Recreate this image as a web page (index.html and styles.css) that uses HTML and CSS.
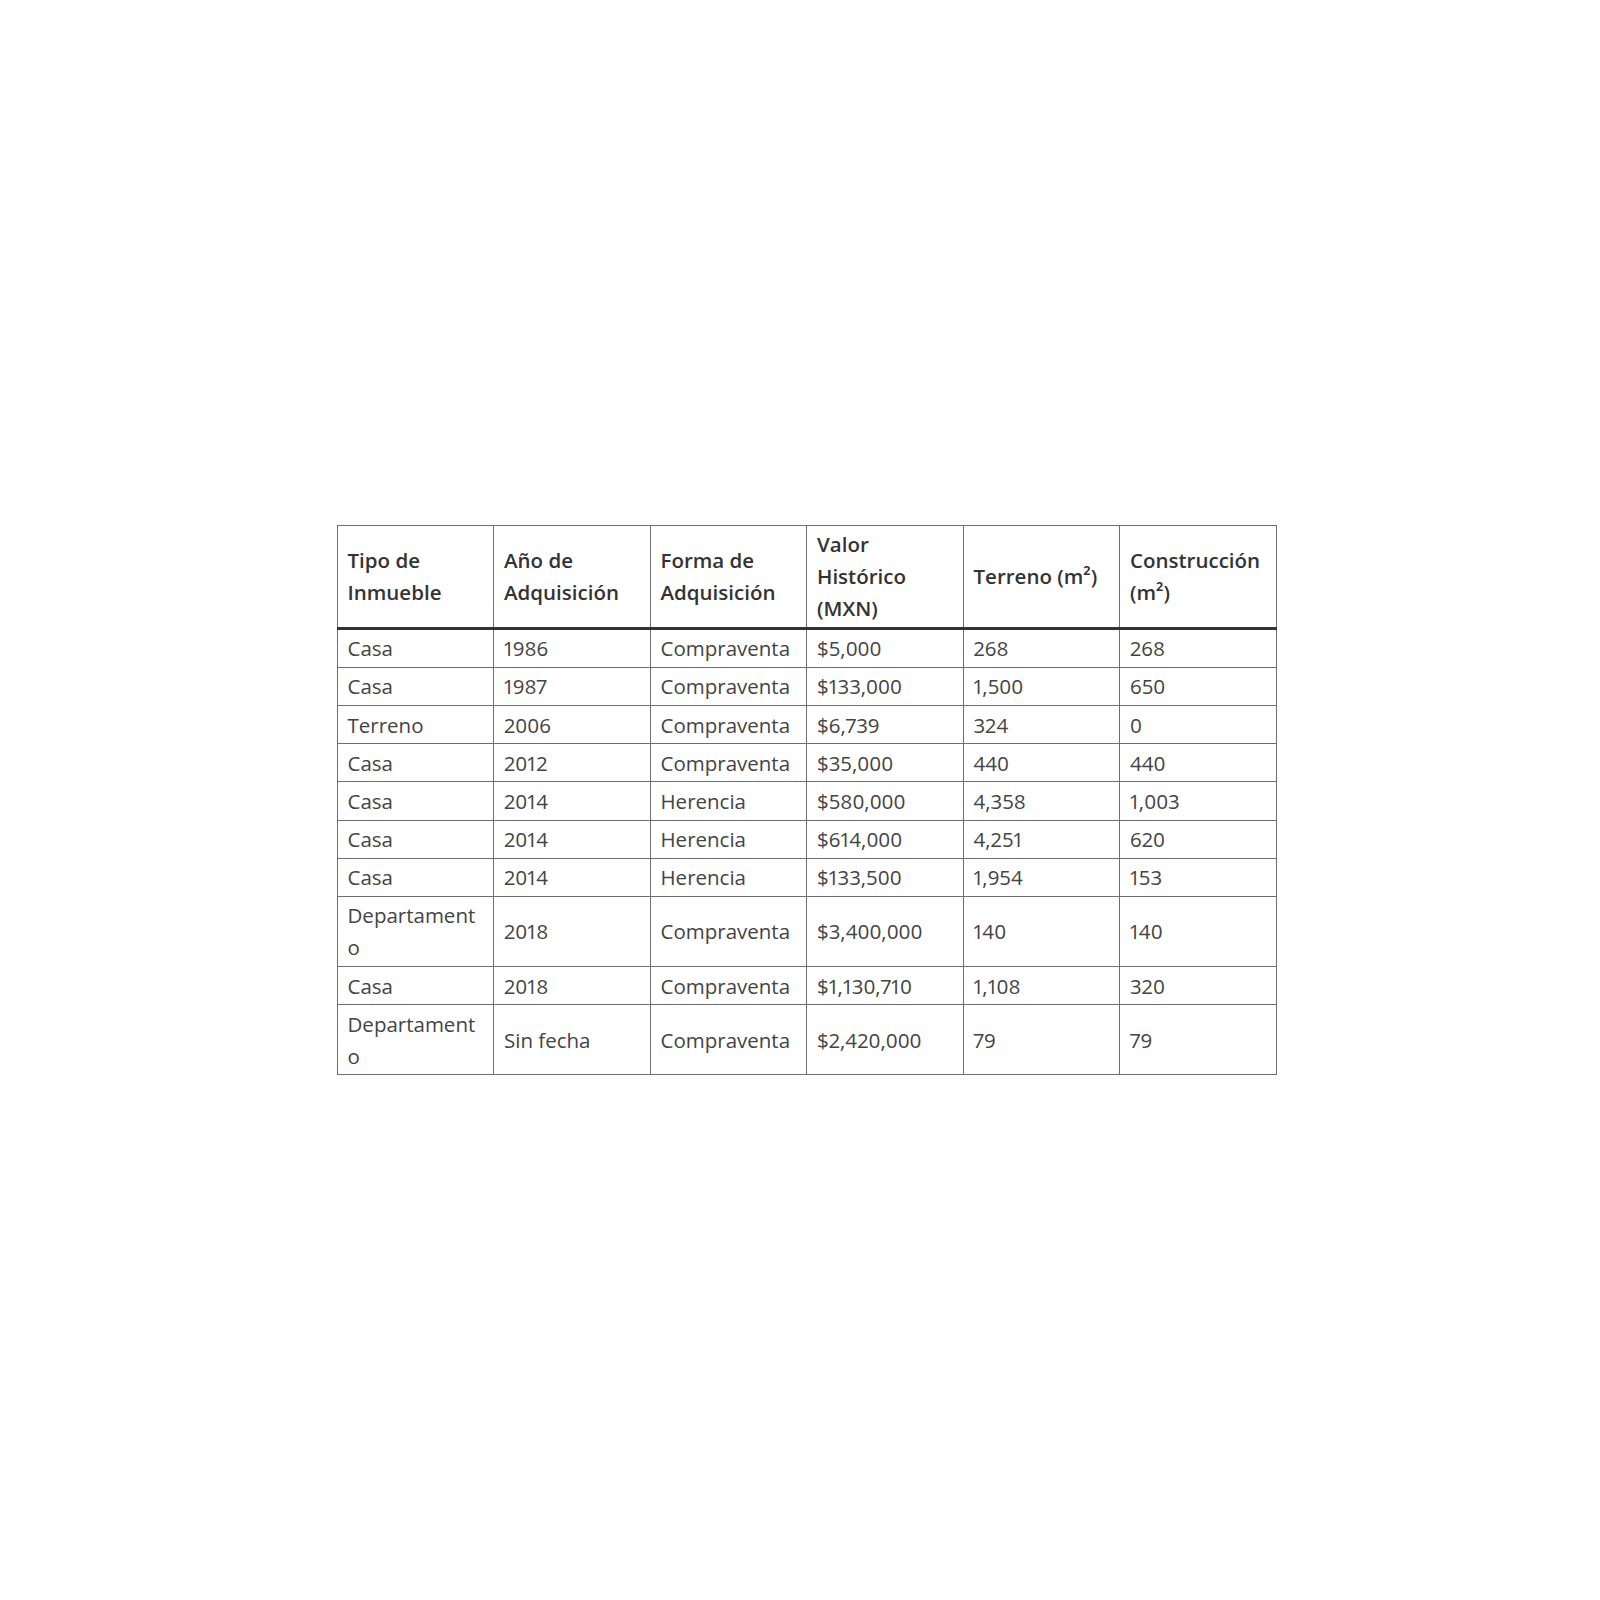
FILE: index.html
```html
<!DOCTYPE html>
<html lang="es">
<head>
<meta charset="utf-8">
<title>Inmuebles</title>
<link rel="stylesheet" href="styles.css">
</head>
<body>
<main class="page">
<table class="assets">
<colgroup><col><col><col><col><col><col></colgroup>
<thead>
<tr>
<th>Tipo de Inmueble</th>
<th>Año de Adquisición</th>
<th>Forma de Adquisición</th>
<th>Valor Histórico (MXN)</th>
<th>Terreno (m²)</th>
<th>Construcción (m²)</th>
</tr>
</thead>
<tbody>
<tr><td>Casa</td><td>1986</td><td>Compraventa</td><td>$5,000</td><td>268</td><td>268</td></tr>
<tr><td>Casa</td><td>1987</td><td>Compraventa</td><td>$133,000</td><td>1,500</td><td>650</td></tr>
<tr><td>Terreno</td><td>2006</td><td>Compraventa</td><td>$6,739</td><td>324</td><td>0</td></tr>
<tr><td>Casa</td><td>2012</td><td>Compraventa</td><td>$35,000</td><td>440</td><td>440</td></tr>
<tr><td>Casa</td><td>2014</td><td>Herencia</td><td>$580,000</td><td>4,358</td><td>1,003</td></tr>
<tr><td>Casa</td><td>2014</td><td>Herencia</td><td>$614,000</td><td>4,251</td><td>620</td></tr>
<tr><td>Casa</td><td>2014</td><td>Herencia</td><td>$133,500</td><td>1,954</td><td>153</td></tr>
<tr><td>Departament<br>o</td><td>2018</td><td>Compraventa</td><td>$3,400,000</td><td>140</td><td>140</td></tr>
<tr><td>Casa</td><td>2018</td><td>Compraventa</td><td>$1,130,710</td><td>1,108</td><td>320</td></tr>
<tr><td>Departament<br>o</td><td>Sin fecha</td><td>Compraventa</td><td>$2,420,000</td><td>79</td><td>79</td></tr>
</tbody>
</table>
</main>
</body>
</html>
```

FILE: styles.css
```css
html, body {
  margin: 0;
  padding: 0;
  background: #ffffff;
}

.page {
  height: 1600px;
  display: flex;
  align-items: center;
  justify-content: center;
  padding-left: 13px;
  box-sizing: border-box;
}

.assets {
  border-collapse: collapse;
  table-layout: fixed;
  width: 940px;
  font-family: "Open Sans", "Noto Sans", sans-serif;
  font-size: 20.5px;
  line-height: 32px;
  color: #444444;
  font-variant-numeric: proportional-nums;
}

.assets col {
  width: 156.5px;
}

.assets th,
.assets td {
  border: 1px solid #6f6f6f;
  padding: 2.6px 10px;
  text-align: left;
  vertical-align: middle;
}

.assets th {
  font-weight: 600;
  color: #333333;
  padding: 2px 10px 3px;
  border-bottom: 3px solid #333333;
}
```
